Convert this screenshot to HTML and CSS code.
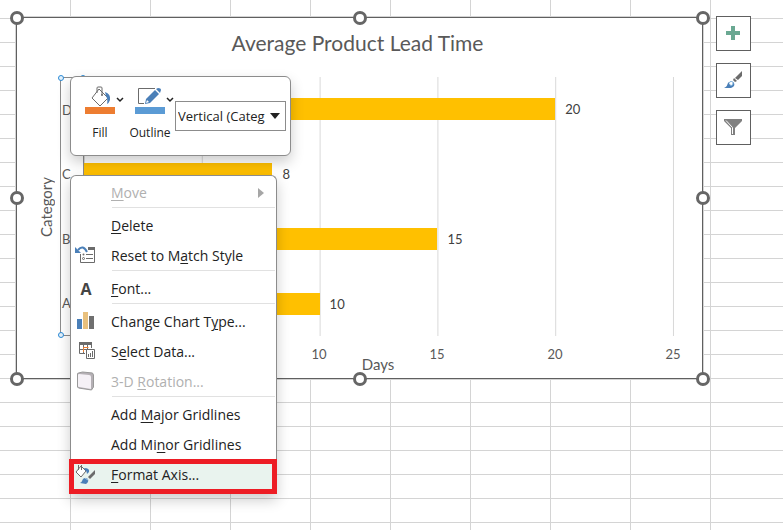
FILE: index.html
```html
<!DOCTYPE html>
<html lang="en">
<head>
    <meta charset="UTF-8">
    <meta name="viewport" content="width=device-width, initial-scale=1.0">
    <title>Average Product Lead Time</title>
    <link rel="stylesheet" href="styles.css">
</head>
<body>
    <main class="sheet">
        <section class="chart">
            <h1 class="chart-title">Average Product Lead Time</h1>
            <div class="chart-body">
                <div class="y-title">Category</div>
                <div class="categories">
                    <span>D</span>
                    <span>C</span>
                    <span>B</span>
                    <span>A</span>
                    <i class="dot dot-tl"></i>
                    <i class="dot dot-tr"></i>
                    <i class="dot dot-bl"></i>
                    <i class="dot dot-br"></i>
                </div>
                <div class="plot">
                    <div class="row"><div class="bar" style="width: 80%"></div><span>20</span></div>
                    <div class="row"><div class="bar" style="width: 32%"></div><span>8</span></div>
                    <div class="row"><div class="bar" style="width: 60%"></div><span>15</span></div>
                    <div class="row"><div class="bar" style="width: 40%"></div><span>10</span></div>
                </div>
                <div class="x-axis">
                    <div class="ticks">
                        <span></span>
                        <span></span>
                        <span>10</span>
                        <span>15</span>
                        <span>20</span>
                        <span>25</span>
                    </div>
                    <div class="x-title">Days</div>
                </div>
            </div>
            <i class="handle top left"></i>
            <i class="handle top center"></i>
            <i class="handle top right"></i>
            <i class="handle middle left"></i>
            <i class="handle middle right"></i>
            <i class="handle bottom left"></i>
            <i class="handle bottom center"></i>
            <i class="handle bottom right"></i>
        </section>

        <aside class="chart-buttons">
            <button type="button" class="chart-button" aria-label="Chart Elements">
                <svg width="20" height="20" viewBox="0 0 20 20"><path d="M7 2h4v5h5v4h-5v5H7v-5H2V7h5z" fill="#6aa892"/></svg>
            </button>
            <button type="button" class="chart-button" aria-label="Chart Styles">
                <svg width="20" height="20" viewBox="0 0 20 20">
                    <path d="M18 0v5l-4 4-3-2z" fill="#6b6b6b"/>
                    <path d="M10 7l3 3-2 1-2-2z" fill="#6b6b6b"/>
                    <path d="M0 17c3-1 3-3 4-5 2-2 5-2 6 0s0 4-3 5z" fill="#4a7fb8"/>
                    <path d="M5 12c1-2 4-2 4 0s-1 3-3 2" fill="#fff" stroke="#7ab0dc"/>
                </svg>
            </button>
            <button type="button" class="chart-button" aria-label="Chart Filters">
                <svg width="20" height="20" viewBox="0 0 20 20">
                    <path d="M0 1h18v2l-7 7v7H7v-7L0 3z" fill="#808080"/>
                    <path d="M2 2.500l6.500 7V16" fill="none" stroke="#fff"/>
                </svg>
            </button>
        </aside>
    </main>

    <div class="mini-toolbar">
        <button type="button" class="tool">
            <span class="tool-icon">
                <svg width="30" height="29" viewBox="0 0 30 29">
                    <path d="M14 4l9 9-8 8-8-8z" fill="#fff" stroke="#6b6b6b"/>
                    <path d="M12 8V3q0-1 1-1h3q1 0 1 1v7" fill="none" stroke="#6b6b6b"/>
                    <circle cx="17" cy="10" r="1" fill="#6b6b6b"/>
                    <path d="M20 7q6 2 5 8-1 3-3 4 1-5-1-8z" fill="#4a7fb8"/>
                    <path d="M0 22h30v7H0z" fill="#ed7d31"/>
                </svg>
                <svg class="chevron" width="8" height="6" viewBox="0 0 8 6"><path d="M1 1l3 3 3-3" fill="none" stroke="#222" stroke-width="1.500"/></svg>
            </span>
            Fill
        </button>
        <button type="button" class="tool">
            <span class="tool-icon">
                <svg width="30" height="29" viewBox="0 0 30 29">
                    <path d="M20 3.500H3.500v15H9" fill="none" stroke="#6b6b6b"/>
                    <path d="M10 19l1-5 9-9 4 4-9 9z" fill="#4a7fb8"/>
                    <path d="M21 4l2-1q3 0 3 2l-1 3z" fill="#4a7fb8"/>
                    <path d="M11 18l1-3 2 2z" fill="#fff"/>
                    <path d="M0 22h30v7H0z" fill="#5b9bd5"/>
                </svg>
                <svg class="chevron" width="8" height="6" viewBox="0 0 8 6"><path d="M1 1l3 3 3-3" fill="none" stroke="#222" stroke-width="1.500"/></svg>
            </span>
            Outline
        </button>
        <div class="element-picker">
            <select aria-label="Chart element">
                <option>Vertical (Categ</option>
            </select>
            <svg width="10" height="6" viewBox="0 0 10 6"><path d="M0 0h10L5 6z" fill="#222"/></svg>
        </div>
    </div>

    <div class="menu" role="menu">
        <button type="button" class="item" role="menuitem" disabled>
            <span class="icon"></span><span><u>M</u>ove</span>
            <svg class="arrow" width="6" height="10" viewBox="0 0 6 10"><path d="M0 0l6 5-6 5z" fill="#a6a6a6"/></svg>
        </button>
        <hr>
        <button type="button" class="item" role="menuitem"><span class="icon"></span><span><u>D</u>elete</span></button>
        <button type="button" class="item" role="menuitem">
            <span class="icon">
                <svg width="20" height="20" viewBox="0 0 20 20">
                    <path d="M12 1h7v3h-7z" fill="#6b6b6b"/>
                    <path d="M4.500 8v8.500h14V2" fill="none" stroke="#6b6b6b"/>
                    <path d="M10 8.500h7M10 12.500h7" stroke="#6b6b6b"/>
                    <circle cx="7.500" cy="8.500" r="1" fill="#6b6b6b"/>
                    <circle cx="7.500" cy="12.500" r="1" fill="none" stroke="#6b6b6b"/>
                    <path d="M-1 1v6h6z" fill="#4a7fb8"/>
                    <path d="M2 4q5-6 9 2" fill="none" stroke="#4a7fb8" stroke-width="2"/>
                </svg>
            </span>
            <span>Reset to M<u>a</u>tch Style</span>
        </button>
        <hr>
        <button type="button" class="item" role="menuitem"><span class="icon letter">A</span><span><u>F</u>ont...</span></button>
        <hr>
        <button type="button" class="item" role="menuitem">
            <span class="icon">
                <svg width="20" height="20" viewBox="0 0 20 20">
                    <path d="M1 7h5v10H1z" fill="#4a7fb8"/>
                    <path d="M7 0h5v17H7z" fill="#e8c07d"/>
                    <path d="M13 4h5v13h-5z" fill="#6f6f6f"/>
                </svg>
            </span>
            <span>Change Chart T<u>y</u>pe...</span>
        </button>
        <button type="button" class="item" role="menuitem">
            <span class="icon">
                <svg width="20" height="20" viewBox="0 0 20 20">
                    <path d="M3 0h13v3H3z" fill="#6b6b6b"/>
                    <path d="M3.500 3v8.500H9M7.500 3v8M11.500 3v4M15.500 3v3M3 7.500h9" fill="none" stroke="#6b6b6b"/>
                    <path d="M7.500 10V5.500h5" fill="none" stroke="#ed7d31"/>
                    <path d="M10.500 7.500h8v9h-8z" fill="#fff" stroke="#6b6b6b"/>
                    <path d="M12.500 15v-3M14.500 15v-4M16.500 15v-6" stroke="#6b6b6b"/>
                </svg>
            </span>
            <span>S<u>e</u>lect Data...</span>
        </button>
        <button type="button" class="item" role="menuitem" disabled>
            <span class="icon">
                <svg width="20" height="20" viewBox="0 0 20 20">
                    <path d="M1.500 2q0-1 1-1l4-1 10 1 1 2v12l-2 3-13-2-1-1z" fill="#b5b0b5" stroke="#999"/>
                    <path d="M2 3q0-1 1-1l10 1q2 0 2 2v12L3 15q-1 0-1-1z" fill="#f5f1f6"/>
                </svg>
            </span>
            <span>3-D <u>R</u>otation...</span>
        </button>
        <hr>
        <button type="button" class="item" role="menuitem"><span class="icon"></span><span>Add <u>M</u>ajor Gridlines</span></button>
        <button type="button" class="item" role="menuitem"><span class="icon"></span><span>Add Mi<u>n</u>or Gridlines</span></button>
        <button type="button" class="item selected" role="menuitem">
            <span class="icon">
                <svg width="20" height="20" viewBox="0 0 20 20">
                    <path d="M5 1l5 5-5 6-5-5z" fill="#fff" stroke="#6b6b6b"/>
                    <path d="M2.500 5V0M5.500 0v5" fill="none" stroke="#6b6b6b"/>
                    <path d="M8 3q6 0 5 4l-2 2q0-3-2-4z" fill="#4a7fb8"/>
                    <path d="M19 5v4l-5 5-2-2z" fill="#6b6b6b"/>
                    <path d="M4 18q2-1 3-4 2-2 5 0 1 3-2 5z" fill="#4a7fb8"/>
                    <path d="M9 13l3 2" stroke="#a9cbe8"/>
                </svg>
            </span>
            <span><u>F</u>ormat Axis...</span>
        </button>
    </div>
</body>
</html>
```
FILE: styles.css
```css
* {
    box-sizing: border-box;
}
body {
    margin: 0;
    min-height: 100vh;
    overflow: hidden;
    position: relative;
    font-family: "Open Sans", "Noto Sans", sans-serif;
    font-size: 14px;
    color: #222;
    /* worksheet cells */
    background-color: #fff;
    background-image:
        linear-gradient(to right, #d4d4d4 1px, transparent 1px),
        linear-gradient(to bottom, #d4d4d4 1px, transparent 1px);
    background-size: 80px 24px;
    background-position: 70px 18px;
}
button,
select {
    font: inherit;
    color: inherit;
}
.sheet {
    display: flex;
    align-items: flex-start;
    gap: 13px;
    padding: 16px 32px 0 16px;
}

/* Chart */
.chart {
    flex: 1;
    position: relative;
    margin-top: 1px;
    padding: 11px 29px 9px 20px;
    background: #fff;
    border: 1px solid #606060;
    box-shadow: 0 0 0 1px #d4d4d4;
    font-family: Lato, sans-serif;
    color: #595959;
}
.chart-title {
    margin: 0 0 20px;
    padding-left: 5px;
    font-size: 21px;
    font-weight: 400;
    line-height: 28px;
    text-align: center;
}
.chart-body {
    display: grid;
    grid-template-columns: 23px 23px 1fr;
}
.y-title {
    justify-self: start;
    writing-mode: vertical-rl;
    transform: rotate(180deg);
    text-align: center;
    font-size: 15px;
    line-height: 18px;
}
.categories {
    position: relative;
    display: grid;
    grid-auto-rows: 1fr;
    align-items: center;
    padding-left: 1px;
    border: 1px solid #8c8c8c;
    border-right: 0;
    font-size: 13px;
}
.dot {
    position: absolute;
    width: 6px;
    height: 6px;
    border: 1px solid #2b8ad6;
    border-radius: 50%;
    background: #e4f1fb;
}
.dot-tl { top: -3px; left: -3px; }
.dot-tr { top: -3px; right: -3px; }
.dot-bl { bottom: -3px; left: -3px; }
.dot-br { bottom: -3px; right: -3px; }
.plot {
    display: grid;
    grid-auto-rows: 1fr;
    height: 259px;
    background-image: linear-gradient(to right, #d9d9d9 1px, transparent 1px);
    background-size: 20% 100%;
    border-left: 1px solid #8c8c8c;
    box-shadow: 1px 0 0 #d9d9d9;
}
.row {
    display: flex;
    align-items: center;
    gap: 10px;
    font-size: 13px;
    color: #404040;
}
.bar {
    height: 22px;
    background: #ffc000;
}
.x-axis {
    grid-column: 3;
    padding-top: 13px;
}
.ticks {
    display: flex;
    justify-content: space-between;
    font-size: 13px;
    line-height: 10px;
}
.ticks span {
    display: flex;
    justify-content: center;
    width: 0;
}
.x-title {
    text-align: center;
    font-size: 15px;
    line-height: 10px;
}
.handle {
    position: absolute;
    width: 14px;
    height: 14px;
    margin: -7px;
    border: 3px solid #666;
    border-radius: 50%;
    background: #fff;
}
.top { top: 0; }
.middle { top: 50%; }
.bottom { top: calc(100% + 1px); }
.left { left: 0; }
.center { left: 50%; }
.right { left: calc(100% + 1px); }

/* Buttons beside the chart */
.chart-buttons {
    display: flex;
    flex-direction: column;
    gap: 12px;
}
.chart-button {
    display: flex;
    align-items: center;
    justify-content: center;
    width: 35px;
    height: 35px;
    padding: 0;
    background: #fff;
    border: 1px solid #606060;
}

/* Floating format toolbar */
.mini-toolbar {
    position: absolute;
    top: 76px;
    left: 70px;
    display: flex;
    align-items: flex-start;
    height: 80px;
    padding: 8px 4px 0 8px;
    background: #fff;
    border: 1px solid #8c8c8c;
    border-radius: 6px;
    box-shadow: 0 6px 14px rgba(0, 0, 0, 0.2);
    font-size: 12px;
}
.tool {
    display: flex;
    flex-direction: column;
    align-items: center;
    gap: 10px;
    width: 50px;
    padding: 0 8px 0 0;
    background: none;
    border: 0;
    line-height: 18px;
}
.tool-icon {
    position: relative;
    display: flex;
}
.chevron {
    position: absolute;
    left: 31px;
    top: 12px;
}
.element-picker {
    position: relative;
    margin: 16px 0 0 -4px;
    font-size: 13px;
}
.element-picker select {
    width: 111px;
    height: 30px;
    padding: 0 16px 0 2px;
    appearance: none;
    background: #fff;
    border: 1px solid #8c8c8c;
    border-radius: 0;
}
.element-picker svg {
    position: absolute;
    right: 6px;
    top: 12px;
    pointer-events: none;
}

/* Context menu */
.menu {
    position: absolute;
    top: 175px;
    left: 70px;
    width: 207px;
    padding-top: 1px;
    background: #fff;
    border: 1px solid #8c8c8c;
    border-bottom: 0;
    border-radius: 6px 6px 0 0;
    box-shadow: 0 6px 14px rgba(0, 0, 0, 0.2);
}
.menu hr {
    height: 1px;
    margin: 0 1px 2px 41px;
    background: #e1e1e1;
    border: 0;
}
.item {
    display: flex;
    align-items: center;
    width: 100%;
    height: 30px;
    padding: 1px 12px 0 5px;
    background: none;
    border: 0;
    text-align: left;
    white-space: nowrap;
}
.item:disabled {
    color: #b0b0b0;
}
.item u {
    text-decoration-thickness: 1px;
    text-underline-offset: 2px;
}
.icon {
    display: flex;
    justify-content: center;
    width: 20px;
    margin-right: 15px;
}
.icon svg {
    overflow: visible;
}
.letter {
    font-size: 16px;
    font-weight: 700;
    line-height: 20px;
    color: #444;
}
.arrow {
    margin-left: auto;
}
.selected {
    width: auto;
    min-width: 208px;
    height: 35px;
    margin-left: -2px;
    padding: 0 7px 4px 2px;
    background: #e9f3ee;
    border: 5px solid #ed1c24;
}
```
